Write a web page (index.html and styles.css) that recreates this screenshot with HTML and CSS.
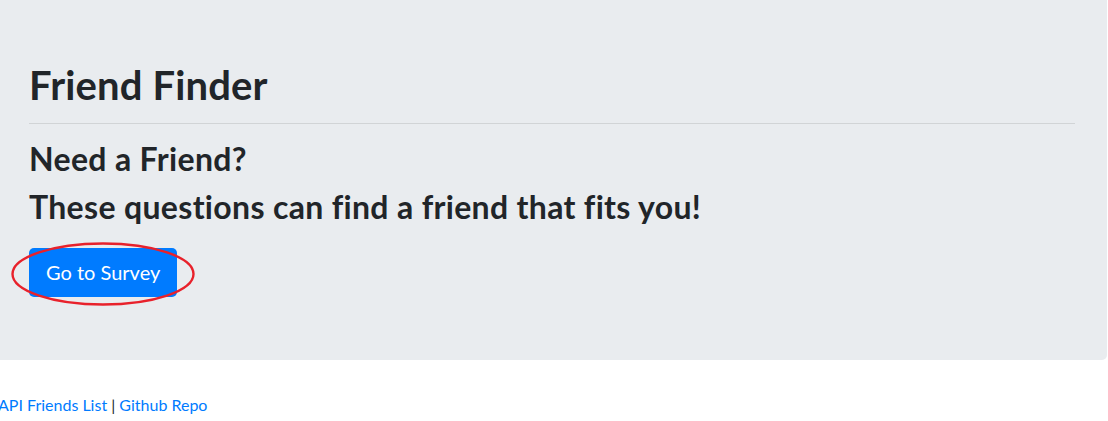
FILE: index.html
```html
<!DOCTYPE html>
<html>
<head>
<meta charset="utf-8">
<title>Friend Finder</title>
<link rel="stylesheet" href="styles.css">
</head>
<body>
<div class="jumbotron">
  <h1 class="title">Friend Finder</h1>
  <hr class="divider">
  <h2 class="lead-line first">Need a Friend?</h2>
  <h2 class="lead-line">These questions can find a friend that fits you!</h2>
  <div class="cta">
    <a class="btn" href="#">Go to Survey</a>
    <svg class="mark" width="186" height="66" viewBox="0 0 186 66" aria-hidden="true">
      <ellipse cx="93" cy="33" rx="90.5" ry="30.5" fill="none" stroke="#e8212b" stroke-width="2.4"/>
    </svg>
  </div>
</div>
<footer class="footer">
  <a href="#">API Friends List</a> | <a href="#">Github Repo</a>
</footer>
</body>
</html>
```

FILE: styles.css
```css
html, body {
  margin: 0;
  padding: 0;
  background: #fff;
}
body {
  font-family: Lato, "Open Sans", "Noto Sans", sans-serif;
  color: #212529;
  font-size: 16px;
  line-height: 1.5;
}
.jumbotron {
  background: #e9ecef;
  margin: -3px 1px 0 -3px;
  padding: 64px 32px 63px 32px;
  border-radius: 0 0 5px 0;
}
.title {
  font-size: 40px;
  font-weight: 700;
  line-height: 48px;
  letter-spacing: 0.15px;
  margin: 0;
}
.divider {
  border: 0;
  border-top: 1px solid rgba(0, 0, 0, 0.1);
  margin: 14px 0 16px 0;
}
.lead-line {
  font-size: 32px;
  font-weight: 700;
  line-height: 38px;
  letter-spacing: 0.33px;
  margin: 0 0 10px 0;
}
.cta {
  position: relative;
  margin-top: 22px;
  display: flex;
}
.btn {
  display: inline-block;
  background: #007bff;
  color: #fff;
  text-decoration: none;
  font-size: 20px;
  line-height: 30px;
  padding: 9px 17px 10px 17px;
  border-radius: 5px;
}
.mark {
  position: absolute;
  left: -19px;
  top: -7px;
}
.footer {
  margin-top: 33px;
  margin-left: -2px;
  line-height: 24px;
  font-size: 16px;
}
.footer a {
  color: #007bff;
  text-decoration: none;
}
```
